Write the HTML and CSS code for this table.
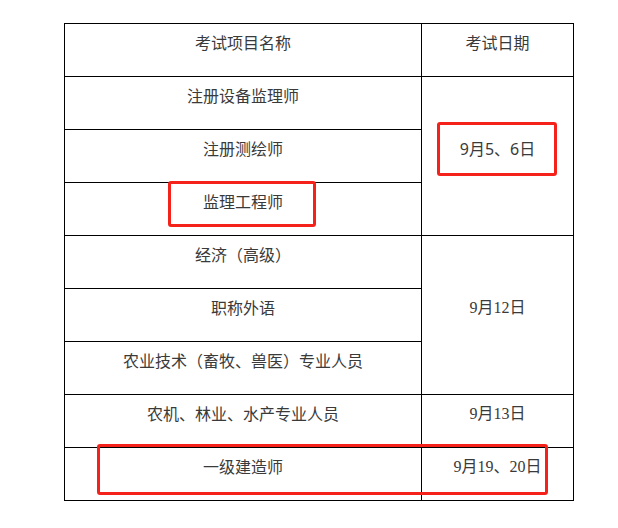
FILE: index.html
```html
<!DOCTYPE html>
<html lang="zh">
<head>
<meta charset="utf-8">
<title>考试日期</title>
<link rel="stylesheet" href="styles.css">
</head>
<body>
<div class="wrap">
  <table class="exam">
    <tr>
      <td class="c1">考试项目名称</td>
      <td class="c2">考试日期</td>
    </tr>
    <tr>
      <td>注册设备监理师</td>
      <td rowspan="3"><span class="sans">9</span>月<span class="sans">5</span>、<span class="sans">6</span>日</td>
    </tr>
    <tr><td>注册测绘师</td></tr>
    <tr><td>监理工程师</td></tr>
    <tr>
      <td>经济（高级）</td>
      <td rowspan="3"><span class="num">9</span>月<span class="num">12</span>日</td>
    </tr>
    <tr><td>职称外语</td></tr>
    <tr><td>农业技术（畜牧、兽医）专业人员</td></tr>
    <tr>
      <td>农机、林业、水产专业人员</td>
      <td><span class="num">9</span>月<span class="num">13</span>日</td>
    </tr>
    <tr>
      <td>一级建造师</td>
      <td><span class="num">9</span>月<span class="num">19</span>、<span class="num">20</span>日</td>
    </tr>
  </table>
  <div class="mark mark-a"></div>
  <div class="mark mark-b"></div>
  <div class="mark mark-c"></div>
</div>
</body>
</html>
```
FILE: styles.css
```css
html, body {
  margin: 0;
  padding: 0;
  background: #fff;
}
.wrap {
  position: relative;
  padding: 23px 0 28px 64px;
}
.exam {
  border-collapse: collapse;
  width: 509px;
  table-layout: fixed;
  font-family: "Noto Sans CJK SC", "Microsoft YaHei", sans-serif;
  font-size: 16px;
  line-height: 20px;
  color: #3a3a3a;
}
.exam td {
  border: 1px solid #000;
  height: 53px;
  box-sizing: border-box;
  padding: 0 4px 16px;
  text-align: center;
  vertical-align: middle;
}
.exam .c1 { width: 357px; }
.exam .c2 { width: 152px; }
.num {
  font-family: "Liberation Serif", serif;
}
.sans {
  font-family: "Noto Sans", sans-serif;
}
.mark {
  position: absolute;
  border: 3px solid #f5221b;
  border-radius: 3px;
  box-sizing: border-box;
}
.mark-a { left: 437px; top: 122px; width: 120px; height: 54px; }
.mark-b { left: 168px; top: 181px; width: 148px; height: 46px; }
.mark-c { left: 97px; top: 444px; width: 451px; height: 51px; }
```
